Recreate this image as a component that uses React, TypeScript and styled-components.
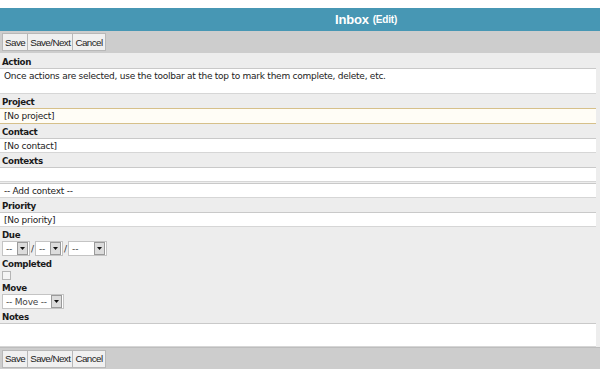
import React from "react";
import styled, { createGlobalStyle } from "styled-components";

const GlobalStyle = createGlobalStyle`
  html, body {
    margin: 0;
    padding: 0;
    background: #fff;
  }
  body {
    padding-top: 8px;
    font-family: "DejaVu Sans", Verdana, sans-serif;
  }
`;

const Page = styled.div`
  width: 600px;
  display: flex;
  flex-direction: column;
`;

const Header = styled.div`
  height: 23px;
  background: #4797b4;
  display: flex;
  align-items: center;
  padding-left: 335px;
  color: #fff;
  font-family: "Liberation Sans", Arial, sans-serif;
`;

const Title = styled.span`
  font-weight: bold;
  font-size: 13px;
  letter-spacing: -0.2px;
`;

const Sub = styled.span`
  font-weight: bold;
  font-size: 10px;
  margin-left: 4px;
  letter-spacing: -0.2px;
`;

const Toolbar = styled.div<{ $bottom?: boolean }>`
  height: 22px;
  background: #cdcdcd;
  display: flex;
  align-items: center;
  padding-left: 2px;
  border-top: ${(p) => (p.$bottom ? "1px solid #bdbdbd" : "none")};
  box-sizing: border-box;
`;

const Button = styled.button`
  height: 18px;
  margin: 0;
  padding: 0 2px;
  background: #f0f0f0;
  border: 1px solid #b8b8b8;
  border-radius: 0;
  font-family: "Liberation Sans", Arial, sans-serif;
  font-size: 9.8px;
  letter-spacing: -0.55px;
  color: #222;
  & + & {
    margin-left: -1px;
  }
`;

const Form = styled.div`
  background: #ededed;
  padding: 1px 4px 0 0;
  display: flex;
  flex-direction: column;
`;

const Label = styled.div`
  font-weight: bold;
  font-size: 8.7px;
  letter-spacing: -0.35px;
  color: #1a1a1a;
  padding: 3px 2px 1px;
  line-height: 10px;
`;

const Field = styled.div<{ $h?: number; $focus?: boolean }>`
  height: ${(p) => p.$h ?? 15}px;
  box-sizing: border-box;
  background: ${(p) => (p.$focus ? "#fffdf6" : "#fff")};
  border-top: 1px solid ${(p) => (p.$focus ? "#d6c08a" : "#c9c9c9")};
  border-bottom: 1px solid ${(p) => (p.$focus ? "#d6c08a" : "#d6d6d6")};
  font-size: 9px;
  letter-spacing: -0.25px;
  color: #222;
  padding: 2px 4px;
  line-height: 10px;
  white-space: nowrap;
  overflow: hidden;
  & + & {
    margin-top: 1px;
  }
`;

const Row = styled.div`
  display: flex;
  align-items: center;
  padding-left: 2px;
  gap: 1px;
  font-size: 9px;
  color: #333;
`;

const Select = styled.div<{ $w: number }>`
  width: ${(p) => p.$w}px;
  height: 15px;
  box-sizing: border-box;
  background: #fff;
  border: 1px solid #c4c4c4;
  display: flex;
  align-items: center;
  justify-content: space-between;
  padding-left: 3px;
  font-size: 9px;
  letter-spacing: -0.2px;
  color: #444;
`;

const Arrow = styled.span`
  width: 9px;
  height: 11px;
  margin-right: 1px;
  background: #dcdcdc;
  border: 1px solid #9a9a9a;
  display: flex;
  align-items: center;
  justify-content: center;
`;

const Check = styled.div`
  width: 7px;
  height: 7px;
  margin: 1px 2px 0;
  border: 1px solid #b5b5b5;
  background: #f4f4f4;
`;

const Drop = ({ w, text }: { w: number; text: string }) => (
  <Select $w={w}>
    <span>{text}</span>
    <Arrow>
      <svg width="5" height="3" viewBox="0 0 5 3">
        <path d="M0 0h5L2.5 3z" fill="#111" />
      </svg>
    </Arrow>
  </Select>
);

const Buttons = () => (
  <>
    <Button>Save</Button>
    <Button>Save/Next</Button>
    <Button>Cancel</Button>
  </>
);

export default function App() {
  return (
    <Page>
      <GlobalStyle />
      <Header>
        <Title>Inbox</Title>
        <Sub>(Edit)</Sub>
      </Header>
      <Toolbar>
        <Buttons />
      </Toolbar>
      <Form>
        <Label>Action</Label>
        <Field $h={26}>
          Once actions are selected, use the toolbar at the top to mark them complete, delete, etc.
        </Field>
        <Label>Project</Label>
        <Field $h={16} $focus>[No project]</Field>
        <Label>Contact</Label>
        <Field>[No contact]</Field>
        <Label>Contexts</Label>
        <Field />
        <Field>-- Add context --</Field>
        <Label>Priority</Label>
        <Field>[No priority]</Field>
        <Label>Due</Label>
        <Row>
          <Drop w={28} text="--" />
          /
          <Drop w={28} text="--" />
          /
          <Drop w={39} text="--" />
        </Row>
        <Label>Completed</Label>
        <Check />
        <Label>Move</Label>
        <Row>
          <Drop w={62} text="-- Move --" />
        </Row>
        <Label>Notes</Label>
        <Field $h={24} />
      </Form>
      <Toolbar $bottom>
        <Buttons />
      </Toolbar>
    </Page>
  );
}
